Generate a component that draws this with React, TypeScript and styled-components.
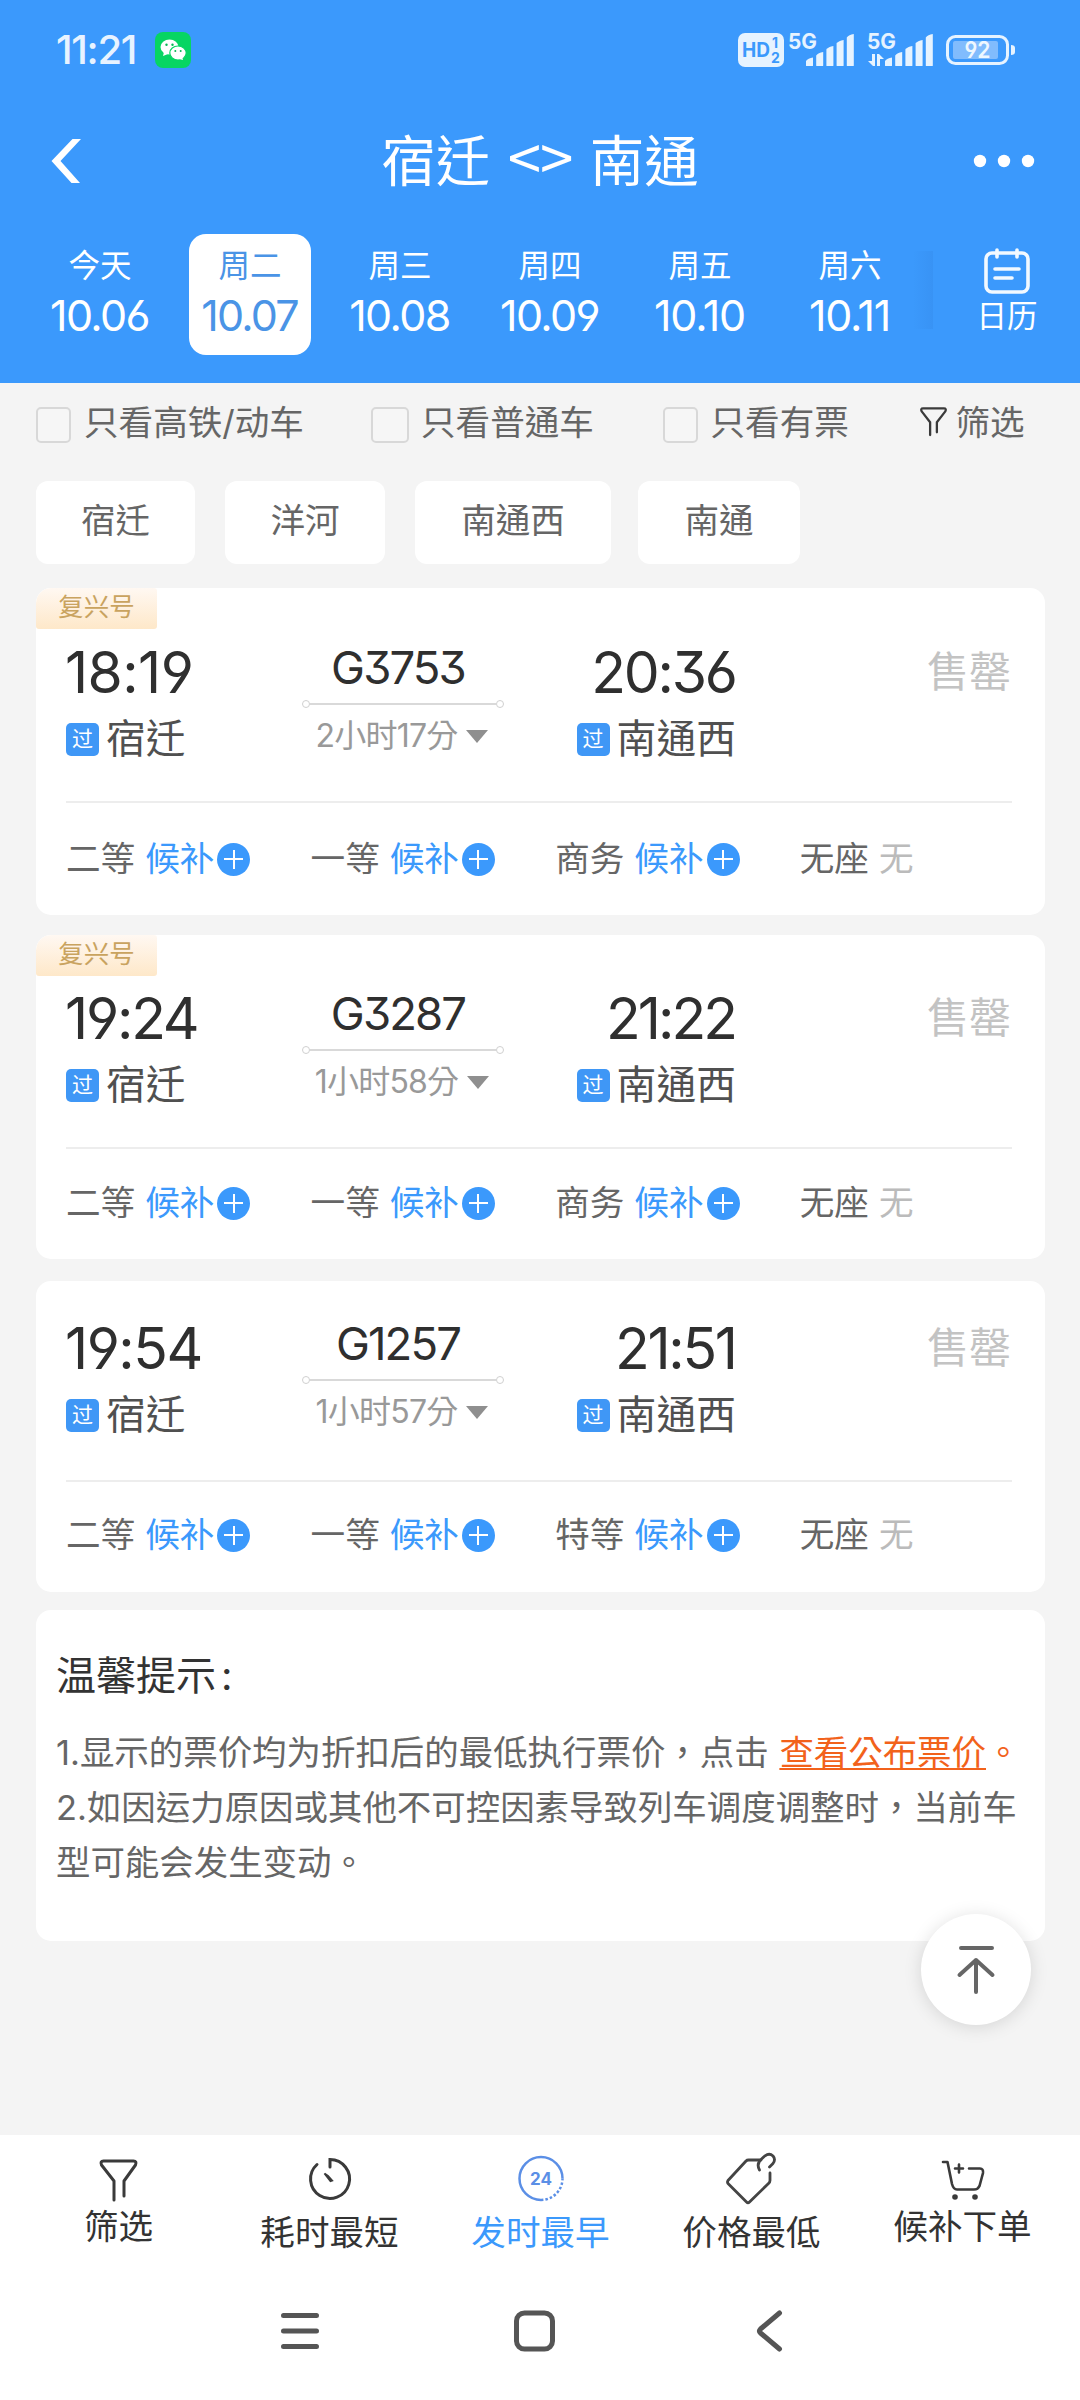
import React from "react";
import styled, { createGlobalStyle } from "styled-components";

const GlobalStyle = createGlobalStyle`
  * { box-sizing: border-box; }
  body { margin: 0; background: #f4f4f4; }
`;

const CJK = '"Inter", "Noto Sans CJK TC", "Noto Sans CJK SC", sans-serif';
const BLUE = "#3b99fc";

const Screen = styled.div`
  width: 1080px;
  height: 2400px;
  display: flex;
  flex-direction: column;
  background: #f4f4f4;
  font-family: ${CJK};
  font-size: 34.6px;
  font-weight: 400;
  color: #666;
  overflow: hidden;
  white-space: nowrap;
  font-feature-settings: "cv03", "cv04", "cv09";
`;

const Header = styled.header`
  height: 383px;
  background: ${BLUE};
  color: #fff;
  flex: none;
`;

const StatusBar = styled.div`
  height: 100px;
  padding: 0 64px 0 56px;
  display: flex;
  align-items: center;
  justify-content: space-between;
`;

const StatusSide = styled.div`
  display: flex;
  align-items: center;
  gap: 19px;
`;

const Clock = styled.span`
  font-size: 40px;
  font-weight: 500;
  line-height: 40px;
  letter-spacing: -1.3px;
  width: 80px;
  color: #e8f3ff;
`;

const TitleBar = styled.div`
  height: 122px;
  padding: 0 44px 0 50px;
  display: grid;
  grid-template-columns: 60px 1fr 66px;
  align-items: center;
`;

const Title = styled.h1`
  margin: 0;
  font-size: 54.5px;
  font-weight: 400;
  line-height: 58px;
  padding-bottom: 2px;
  text-align: center;
`;

const Arrows = styled.span`
  font-family: "Noto Sans CJK TC", sans-serif;
  font-size: 60px;
  line-height: 50px;
  letter-spacing: -1px;
  margin: 0 2px;
`;

const DateRow = styled.div`
  display: grid;
  grid-template-columns: repeat(6, 150px) 1fr;
  padding: 12px 0 0 25px;
`;

const DateCell = styled.div<{ $active?: boolean }>`
  width: 122px;
  height: 121px;
  margin-left: 14px;
  border-radius: 17px;
  background: ${(p) => (p.$active ? "#fff" : "transparent")};
  color: ${(p) => (p.$active ? "#4a94e6" : "#fff")};
  display: flex;
  flex-direction: column;
  align-items: center;
  padding-top: 13px;
`;

const Weekday = styled.span`
  font-size: 31.5px;
  line-height: 38px;
`;

const DateText = styled.span<{ $track: number }>`
  font-size: 43px;
  line-height: 50px;
  margin: 5px 1px 0 0;
  letter-spacing: ${(p) => p.$track}px;
`;

const Calendar = styled.div`
  display: flex;
  flex-direction: column;
  align-items: center;
  height: 88px;
  margin-top: 14px;
  padding-left: 9px;
  position: relative;
  &::before {
    content: "";
    position: absolute;
    left: -12px;
    top: 3px;
    width: 20px;
    height: 78px;
    background: linear-gradient(90deg, rgba(40, 110, 200, 0), rgba(40, 110, 200, 0.14));
  }
`;

const CalendarLabel = styled.span`
  font-size: 30.5px;
  line-height: 34px;
  margin-top: 5px;
`;

const FilterRow = styled.div`
  height: 98px;
  padding: 0 56px 20px 36px;
  display: grid;
  grid-template-columns: 335px 291.5px 257px 1fr;
  align-items: center;
  flex: none;
`;

const FilterOption = styled.label<{ $gap?: number }>`
  display: flex;
  align-items: center;
  gap: ${(p) => p.$gap ?? 13}px;
  line-height: 40px;
`;

const CheckBox = styled.i<{ $w?: number }>`
  width: ${(p) => p.$w ?? 35}px;
  height: 36px;
  margin-top: 6px;
  border: 2px solid #d8d8d8;
  border-radius: 5px;
  background: #f6f6f6;
`;

const ChipRow = styled.div`
  display: flex;
  padding: 0 36px;
  flex: none;
`;

const Chip = styled.div<{ $w: number; $mr: number }>`
  width: ${(p) => p.$w}px;
  height: 83px;
  margin-right: ${(p) => p.$mr}px;
  border-radius: 12px;
  background: #fff;
  display: flex;
  justify-content: center;
  line-height: 79px;
`;

const CardList = styled.main`
  padding: 24px 35px 0 36px;
  display: flex;
  flex-direction: column;
`;

const Card = styled.article<{ $h: number; $mb: number; $shift: number }>`
  height: ${(p) => p.$h}px;
  margin-bottom: ${(p) => p.$mb}px;
  padding: ${(p) => p.$shift}px 33px 0 30px;
  border-radius: 15px;
  background: #fff;
  position: relative;
  overflow: hidden;
`;

const Tag = styled.span`
  position: absolute;
  left: 0;
  top: 0;
  width: 121px;
  height: 41px;
  line-height: 38px;
  text-align: center;
  font-size: 25.5px;
  color: #c9a35f;
  border-radius: 15px 3px 3px 3px;
  background: linear-gradient(#fff8f2, #fee8c9);
`;

const Trip = styled.div<{ $h: number }>`
  height: ${(p) => p.$h}px;
  display: grid;
  grid-template-columns: 237px 200px 233px 1fr;
  border-bottom: 2px solid #ededed;
`;

const Stop = styled.div<{ $right?: boolean }>`
  display: flex;
  flex-direction: column;
  align-items: ${(p) => (p.$right ? "flex-end" : "flex-start")};
`;

const Time = styled.span<{ $track: number }>`
  font-size: 57px;
  font-weight: 385;
  line-height: 60px;
  color: #2f2f2f;
  letter-spacing: ${(p) => p.$track}px;
  margin-right: ${(p) => -p.$track - 2}px;
  margin-left: -1px;
`;

const Station = styled.span`
  margin-top: 12px;
  display: flex;
  align-items: center;
  gap: 7px;
  font-size: 39.8px;
  line-height: 48px;
  color: #505050;
`;

const Pass = styled.i`
  width: 33px;
  height: 33px;
  margin-top: 1px;
  border-radius: 5px;
  background: #3f97f6;
  color: #fff;
  font-size: 21px;
  line-height: 32px;
  font-style: normal;
  text-align: center;
`;

const Middle = styled.div`
  display: flex;
  flex-direction: column;
  align-items: center;
`;

const TrainNo = styled.span<{ $track: number }>`
  font-size: 45.5px;
  font-weight: 370;
  line-height: 48px;
  margin: 1px 10px 0 0;
  color: #2f2f2f;
  letter-spacing: ${(p) => p.$track}px;
`;

const Track = styled.div`
  width: 202px;
  height: 6px;
  margin-top: 9px;
  flex: none;
  display: flex;
  align-items: center;
  &::before,
  &::after {
    content: "";
    width: 6px;
    height: 6px;
    border: 1px solid #d0d0d0;
    border-radius: 50%;
  }
`;

const TrackLine = styled.i`
  flex: 1;
  height: 1.5px;
  background: #d9d9d9;
`;

const Duration = styled.span`
  margin: 9px 2px 0 0;
  display: flex;
  align-items: center;
  gap: 9px;
  font-size: 32px;
  line-height: 40px;
  color: #999;
  letter-spacing: -0.8px;
`;

const Caret = styled.i`
  border: 11px solid transparent;
  border-top: 13px solid #8f8f8f;
  border-bottom: 0;
  margin-top: 1px;
`;

const SoldOut = styled.span`
  justify-self: end;
  font-size: 42px;
  line-height: 58px;
  color: #c3c3c3;
  margin-right: 1px;
`;

const Seats = styled.div<{ $top: number }>`
  margin-top: ${(p) => p.$top}px;
  display: grid;
  grid-template-columns: repeat(4, 244.6px);
`;

const Seat = styled.div`
  display: flex;
  align-items: center;
  line-height: 40px;
`;

const Waitlist = styled.span`
  margin-left: 10px;
  color: ${BLUE};
`;

const NoSeat = styled.span`
  margin-left: 10px;
  color: #bbb;
`;

const Plus = styled.i`
  width: 33px;
  height: 33px;
  margin: 2px 0 0 3px;
  border-radius: 50%;
  background:
    linear-gradient(#fff, #fff) center / 19px 2px no-repeat,
    linear-gradient(#fff, #fff) center / 2px 19px no-repeat,
    ${BLUE};
`;

const Tips = styled.section`
  height: 331px;
  padding: 41px 20px 0;
  border-radius: 15px;
  background: #fff;
`;

const TipsTitle = styled.h2`
  margin: 0 0 24px;
  font-size: 40px;
  line-height: 50px;
  font-weight: 400;
  color: #333;
  span { margin-left: 5px; }
`;

const TipLine = styled.p`
  margin: 0;
  font-size: 34.45px;
  line-height: 55px;
  a {
    margin-left: 1px;
    color: #f2621b;
    text-decoration: underline;
    text-decoration-thickness: 2px;
    text-underline-offset: 3px;
    text-decoration-skip-ink: none;
  }
  em {
    color: #f2621b;
    font-style: normal;
  }
`;

const BackToTop = styled.button`
  position: absolute;
  left: 921px;
  top: 1914px;
  width: 110px;
  height: 111px;
  padding: 0;
  border: 0;
  border-radius: 50%;
  background: #fff;
  box-shadow: 0 2px 18px rgba(0, 0, 0, 0.13);
`;

const Footer = styled.footer`
  margin-top: auto;
  height: 265px;
  background: #fff;
  flex: none;
`;

const SortBar = styled.nav`
  height: 150px;
  padding: 16px 12px 0 13px;
  display: grid;
  grid-template-columns: repeat(5, 1fr);
`;

const SortItem = styled.div<{ $active?: boolean; $raised?: boolean }>`
  display: flex;
  flex-direction: column;
  align-items: center;
  gap: ${(p) => (p.$raised ? 1 : 7)}px;
  line-height: 40px;
  color: ${(p) => (p.$active ? BLUE : "#333")};
`;

const SystemNav = styled.div`
  height: 91px;
  padding: 0 285px 0 273px;
  display: flex;
  justify-content: space-between;
  align-items: center;
  svg { display: block; }
`;

const Signal = ({ data }: { data?: boolean }) => (
  <svg width="66" height="36" viewBox="0 0 66 36" fill="#e6f3ff" overflow="visible">
    <text x="-1" y="16.500" fontFamily="Inter, sans-serif" fontSize="21.500" fontWeight="700" textLength="29" lengthAdjust="spacingAndGlyphs">5G</text>
    {data && <path d="M4 22h3v12H5l-5-5h4zM9 34V22h2l5 5h-4v7z" />}
    {[0, 1, 2, 3, 4].map((i) => {
      const top = [26, 20.5, 14.5, 8.5, 2.5][i];
      const x = 17 + i * 10.2;
      return <path key={i} d={`M${x} ${top + 3}q2-3 7-3.500V33.500q0 .5-.6.5h-5.900q-.5 0-.5-.5z`} />;
    })}
  </svg>
);

const StatusIcons = () => (
  <>
    <svg width="46" height="36" viewBox="0 0 46 36" overflow="visible">
      <rect y="1" width="46" height="34" rx="7" fill="#e6f3ff" />
      <g fill={BLUE} fontFamily="Inter, sans-serif" fontWeight="700">
        <text x="4" y="25" fontSize="20" textLength="28" lengthAdjust="spacingAndGlyphs">HD</text>
        <text x="34" y="16" fontSize="14">1</text>
        <text x="33" y="31" fontSize="14">2</text>
      </g>
    </svg>
    <Signal />
    <Signal data />
    <svg width="70" height="36" viewBox="0 0 70 36">
      <rect x="1.500" y="4.500" width="60" height="27" rx="8" fill="none" stroke="#e6f3ff" strokeWidth="3" />
      <rect x="7" y="9" width="45" height="18" rx="2" fill="#81bcfd" />
      <path d="M65 13q4 0 4 3v4q0 3-4 3z" fill="#e6f3ff" />
      <text x="31.500" y="26" textAnchor="middle" fontSize="23" fontWeight="600" fill="#eef7ff" fontFamily="Inter, sans-serif" textLength="26" lengthAdjust="spacingAndGlyphs">92</text>
    </svg>
  </>
);

const StatusIconRow = styled.div`
  display: flex;
  align-items: center;
  svg { display: block; }
  svg:nth-child(2) { margin-left: 5px; }
  svg:nth-child(3) { margin-left: 13px; }
  svg:nth-child(4) { margin-left: 12px; }
`;

const WeChat = () => (
  <svg width="36" height="36" viewBox="0 0 36 36">
    <rect width="36" height="36" rx="8" fill="#07d563" />
    <ellipse cx="14.500" cy="15" rx="9" ry="7.500" fill="#fff" />
    <path d="M9 20l-1 4 5-2z" fill="#fff" />
    <ellipse cx="23" cy="21" rx="8.200" ry="7" fill="#fff" stroke="#07d563" strokeWidth="1.200" />
    <path d="M24 27l4 1-1-4z" fill="#fff" />
    <g fill="#07b856">
      <circle cx="11.500" cy="12.800" r="1.200" />
      <circle cx="17.500" cy="12.800" r="1.200" />
      <circle cx="20.300" cy="19" r="1" />
      <circle cx="25.700" cy="19" r="1" />
    </g>
  </svg>
);

const Funnel = ({ size, stroke }: { size: number; stroke: number }) => (
  <svg width={size} height={(size * 44) / 40} viewBox="0 0 40 44" fill="none" stroke="#3a3a3a" strokeWidth={stroke} strokeLinecap="round" strokeLinejoin="round">
    <path d="M15 41.500V22.500L2.500 6.500Q.5 2 4.500 2H35.500Q39.500 2 37.500 6.500L25 22.500V37.500" />
  </svg>
);

const dates = [
  { day: "今天", date: "10.06", track: -1.6 },
  { day: "周二", date: "10.07", track: -1.8, active: true },
  { day: "周三", date: "10.08", track: -1.6 },
  { day: "周四", date: "10.09", track: -1.6 },
  { day: "周五", date: "10.10", track: -1.2 },
  { day: "周六", date: "10.11", track: -1.2 },
];

interface Train {
  dep: string;
  depTrack: number;
  arr: string;
  arrTrack: number;
  no: string;
  dur: string;
  third: string;
  tag: boolean;
  height: number;
  gap: number;
  shift: number;
  tripHeight: number;
  seatsTop: number;
}

const trains: Train[] = [
  { dep: "18:19", depTrack: -0.6, arr: "20:36", arrTrack: -2.2, no: "G3753", dur: "2小时17分", third: "商务", tag: true, height: 327, gap: 20, shift: 55, tripHeight: 160, seatsTop: 35 },
  { dep: "19:24", depTrack: -2.2, arr: "21:22", arrTrack: -3, no: "G3287", dur: "1小时58分", third: "商务", tag: true, height: 324, gap: 22, shift: 54, tripHeight: 160, seatsTop: 33 },
  { dep: "19:54", depTrack: -1.5, arr: "21:51", arrTrack: -2.3, no: "G1257", dur: "1小时57分", third: "特等", tag: false, height: 311, gap: 18, shift: 38, tripHeight: 163, seatsTop: 32 },
];

const TrainCard = ({ t }: { t: Train }) => (
  <Card $h={t.height} $mb={t.gap} $shift={t.shift}>
    {t.tag && <Tag>复兴号</Tag>}
    <Trip $h={t.tripHeight}>
      <Stop>
        <Time $track={t.depTrack}>{t.dep}</Time>
        <Station><Pass>过</Pass>宿迁</Station>
      </Stop>
      <Middle>
        <TrainNo $track={-1.9}>{t.no}</TrainNo>
        <Track><TrackLine /></Track>
        <Duration>{t.dur}<Caret /></Duration>
      </Middle>
      <Stop $right>
        <Time $track={t.arrTrack}>{t.arr}</Time>
        <Station><Pass>过</Pass>南通西</Station>
      </Stop>
      <SoldOut>售罄</SoldOut>
    </Trip>
    <Seats $top={t.seatsTop}>
      {["二等", "一等", t.third].map((s) => (
        <Seat key={s}>{s}<Waitlist>候补</Waitlist><Plus /></Seat>
      ))}
      <Seat>无座<NoSeat>无</NoSeat></Seat>
    </Seats>
  </Card>
);

export default function App() {
  return (
    <Screen>
      <GlobalStyle />
      <Header>
        <StatusBar>
          <StatusSide><Clock>11:21</Clock><WeChat /></StatusSide>
          <StatusIconRow><StatusIcons /></StatusIconRow>
        </StatusBar>
        <TitleBar>
          <svg width="34" height="46" viewBox="0 0 34 46">
            <path d="M22.500 1H31L10.500 23 30 45H21.500L1.500 23z" fill="#fff" />
          </svg>
          <Title>宿迁 <Arrows>&lt;&gt;</Arrows> 南通</Title>
          <svg width="66" height="16" viewBox="0 0 66 16" fill="#fff">
            <circle cx="10" cy="8" r="6.200" /><circle cx="34" cy="8" r="6.200" /><circle cx="58" cy="8" r="6.200" />
          </svg>
        </TitleBar>
        <DateRow>
          {dates.map((d) => (
            <DateCell key={d.date} $active={d.active}>
              <Weekday>{d.day}</Weekday>
              <DateText $track={d.track}>{d.date}</DateText>
            </DateCell>
          ))}
          <Calendar>
            <svg width="46" height="46" viewBox="0 0 46 46" fill="none" stroke="#f2f9ff" strokeWidth="3.600" strokeLinecap="round">
              <rect x="2" y="5" width="42" height="39" rx="6" />
              <path d="M13 2v7M33 2v7" /><path d="M11 21h24M11 30h17" />
            </svg>
            <CalendarLabel>日历</CalendarLabel>
          </Calendar>
        </DateRow>
      </Header>

      <FilterRow>
        <FilterOption><CheckBox />只看高铁/动车</FilterOption>
        <FilterOption $gap={12}><CheckBox $w={38} />只看普通车</FilterOption>
        <FilterOption><CheckBox />只看有票</FilterOption>
        <FilterOption $gap={9}><Funnel size={27} stroke={3.4} />筛选</FilterOption>
      </FilterRow>

      <ChipRow>
        <Chip $w={159} $mr={30}>宿迁</Chip>
        <Chip $w={160} $mr={30}>洋河</Chip>
        <Chip $w={196} $mr={27}>南通西</Chip>
        <Chip $w={162} $mr={0}>南通</Chip>
      </ChipRow>

      <CardList>
        {trains.map((t) => <TrainCard key={t.no} t={t} />)}
        <Tips>
          <TipsTitle>温馨提示<span>:</span></TipsTitle>
          <TipLine>1.显示的票价均为折扣后的最低执行票价，点击 <a>查看公布票价</a><em>。</em></TipLine>
          <TipLine>2.如因运力原因或其他不可控因素导致列车调度调整时，当前车</TipLine>
          <TipLine>型可能会发生变动。</TipLine>
        </Tips>
      </CardList>

      <BackToTop>
        <svg width="110" height="110" viewBox="0 0 110 110" fill="none" stroke="#666" strokeWidth="4" strokeLinecap="round" strokeLinejoin="round">
          <path d="M40 34H71M55 78V46M38.500 61L55 46 71.500 61" />
        </svg>
      </BackToTop>

      <Footer>
        <SortBar>
          <SortItem $raised>
            <svg width="50" height="54" viewBox="0 0 50 54" fill="none" stroke="#3a3a3a" strokeWidth="3" strokeLinecap="round" strokeLinejoin="round">
              <path d="M20 49V30L7.500 14Q6 10 9.500 10H39.500Q43 10 41.500 14L30 30V45" />
            </svg>
            筛选
          </SortItem>
          <SortItem>
            <svg width="50" height="54" viewBox="0 0 50 54" fill="none" stroke="#3a3a3a" strokeWidth="3" strokeLinecap="round">
              <path d="M25 16V8.500A19.500 19.500 0 1 1 12 13.500" /><path d="M19.500 22.500L23 25 27 29.500 25.500 30z" strokeWidth="2" fill="#3a3a3a" />
            </svg>
            耗时最短
          </SortItem>
          <SortItem $active>
            <svg width="50" height="54" viewBox="0 0 50 54" fill="none" stroke="#5b8fe6" strokeWidth="2.500">
              <path d="M46.500 27.500A21.500 21.500 0 1 0 25 49" /><path d="M25 49A21.500 21.500 0 0 0 46.500 27.500" strokeDasharray="2.500 2" />
              <text x="25" y="33.500" fontSize="17" fontWeight="700" textAnchor="middle" fill="#5b8fe6" stroke="none" fontFamily="Inter, sans-serif">24</text>
            </svg>
            发时最早
          </SortItem>
          <SortItem>
            <svg width="54" height="54" viewBox="0 0 54 54" fill="none" stroke="#444" strokeWidth="2.800" strokeLinecap="round" strokeLinejoin="round">
              <path d="M36 9H23.500Q22 9 21 10L3 29.500Q2 31 3 32.500L21.500 51Q23 52.500 24.500 51L43.500 32.500Q45 31 45 29.500V22" />
              <path d="M34.500 19Q31 12.500 36.500 8L40 4.800Q44.500 1.500 48 5Q51 8.500 48 12.500L44.500 16" />
            </svg>
            价格最低
          </SortItem>
          <SortItem $raised>
            <svg width="50" height="54" viewBox="0 0 50 54" fill="none" stroke="#3a3a3a" strokeWidth="2.600" strokeLinecap="round" strokeLinejoin="round">
              <path d="M5 11H9.500L14 33Q15.500 38.500 19 38.500H36Q40 38.500 41.500 35L45 22Q45.500 17.500 42 17.500H31M17 17.500H25M21 13.500V21.500" />
              <g fill="#3a3a3a" stroke="none"><circle cx="17" cy="46" r="2.800" /><circle cx="37" cy="46" r="2.800" /></g>
            </svg>
            候补下单
          </SortItem>
        </SortBar>
        <SystemNav>
          <svg width="54" height="44" viewBox="0 0 54 44" stroke="#555" strokeWidth="5" strokeLinecap="round"><path d="M10.500 6.500H43.500M10.500 22H43.500M10.500 37.500H43.500" /></svg>
          <svg width="54" height="44" viewBox="0 0 54 44" fill="none" stroke="#555" strokeWidth="5"><rect x="9.500" y="4" width="36" height="36" rx="8" /></svg>
          <svg width="54" height="44" viewBox="0 0 54 44" fill="none" stroke="#555" strokeWidth="5" strokeLinecap="round" strokeLinejoin="round"><path d="M38.500 4L19.500 20Q17.500 22 19.500 24L38.500 40" /></svg>
        </SystemNav>
      </Footer>
    </Screen>
  );
}
